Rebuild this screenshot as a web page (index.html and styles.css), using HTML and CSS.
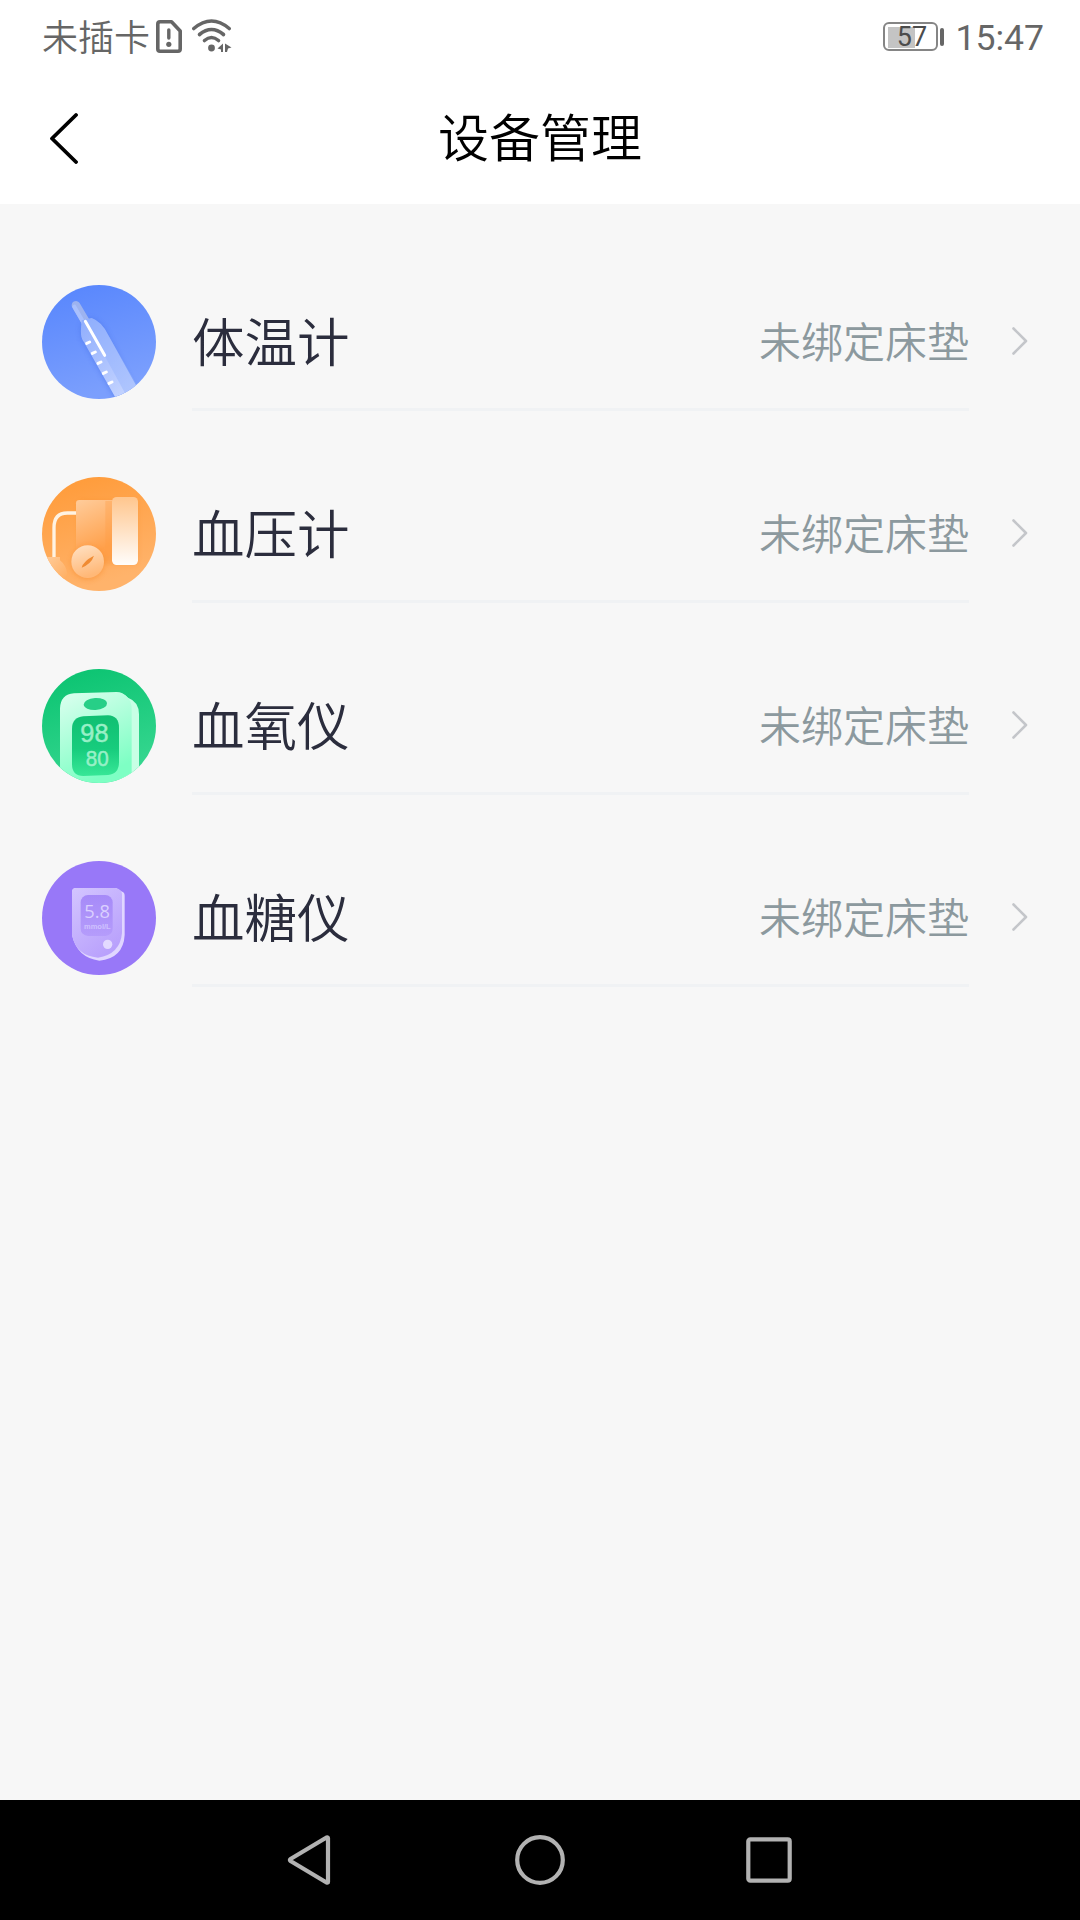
FILE: index.html
```html
<!DOCTYPE html>
<html lang="zh-CN">
<head>
    <meta charset="UTF-8">
    <meta name="viewport" content="width=device-width, initial-scale=1.0">
    <title>设备管理</title>
    <link rel="stylesheet" href="styles.css">
</head>
<body>
    <!-- Status bar -->
    <div class="status-bar">
        <span class="carrier">未插卡</span>
        <svg class="sim-icon" viewBox="0 0 26 33">
            <path d="M4 1.8H15.5L24.2 11V29Q24.2 31.2 22 31.2H4Q1.8 31.2 1.8 29V4Q1.8 1.8 4 1.8Z" fill="none" stroke="#666" stroke-width="3.6" stroke-linejoin="round"/>
            <path d="M12.8 10V18" stroke="#666" stroke-width="3.4" stroke-linecap="round"/>
            <circle cx="12.8" cy="24.3" r="2.6" fill="#666"/>
        </svg>
        <svg class="wifi-icon" viewBox="0 0 40 34">
            <g fill="none" stroke="#666" stroke-width="3.6" stroke-linecap="round">
                <path d="M1.8 9.5Q19.5 -5.5 37.2 9.5"/>
                <path d="M7.5 15.5Q19.5 5.5 31.5 15.5"/>
                <path d="M12.5 21.5Q19.5 15.5 26.5 21.5"/>
            </g>
            <circle cx="19.5" cy="29" r="3.4" fill="#666"/>
            <path d="M25.5 29.5L31 24.5V33H29V30.5ZM33 24.5L39.5 28.5L36 29.5L35 33H33Z" fill="#666"/>
        </svg>
        <div class="battery">
            <div class="battery-body">
                <div class="battery-level"></div>
                <span class="battery-text">57</span>
            </div>
            <div class="battery-cap"></div>
        </div>
        <span class="time">15:47</span>
    </div>

    <!-- Title bar -->
    <header class="header">
        <svg class="back" viewBox="0 0 30 52">
            <path d="M28 3L4 26.5L28 50" fill="none" stroke="#000" stroke-width="3.8" stroke-linecap="round" stroke-linejoin="round"/>
        </svg>
        <h1>设备管理</h1>
    </header>

    <!-- Device list -->
    <main class="device-list">
        <div class="device">
            <svg class="device-icon" viewBox="0 0 342 342">
                <defs>
                    <linearGradient id="blue" x1="0" y1="0" x2="0.3" y2="1">
                        <stop offset="0" stop-color="#5685fd"/>
                        <stop offset="1" stop-color="#7b9ffd"/>
                    </linearGradient>
                    <linearGradient id="glass" x1="0" y1="0" x2="0.7" y2="1">
                        <stop offset="0" stop-color="#8fadfd"/>
                        <stop offset="1" stop-color="#c6d5ff"/>
                    </linearGradient>
                    <filter id="soft" x="-30%" y="-30%" width="160%" height="160%">
                        <feGaussianBlur stdDeviation="8"/>
                    </filter>
                    <clipPath id="round"><circle cx="171" cy="171" r="171"/></clipPath>
                </defs>
                <g clip-path="url(#round)">
                    <rect width="342" height="342" fill="url(#blue)"/>
                    <path d="M115 120L117 160L220 342H296L199 151Q180 105 145 98Z" fill="#4670e8" opacity="0.45" filter="url(#soft)"/>
                    <path d="M102 61L133 114" stroke="#9db3ef" stroke-width="26" stroke-linecap="round"/>
                    <path d="M97 65L127 117" stroke="#a9c0fd" stroke-width="12" stroke-linecap="round"/>
                    <path d="M119 106Q115 140 118 155Q120 163 126 172L225 346L305 342L199 151Q180 110 149 99Z" fill="url(#glass)"/>
                    <path d="M188 212L255 335L310 342L199 151Q180 110 149 99L132 103Z" fill="#8eaefd" opacity="0.4"/>
                    <path d="M130 109L188 211" stroke="#fff" stroke-width="9" stroke-linecap="round"/>
                    <path d="M134 175L143 171M151 205L160 201M168 235L177 231M184 265L193 261M201 295L210 291" stroke="#fff" stroke-width="9" stroke-linecap="round"/>
                </g>
            </svg>
            <div class="device-info">
                <span class="device-name">体温计</span>
                <span class="device-state">未绑定床垫</span>
            </div>
            <svg class="arrow" viewBox="0 0 18 30"><path d="M2.5 2.5L15 15L2.5 27.5"/></svg>
        </div>

        <div class="device">
            <svg class="device-icon" viewBox="0 0 342 342">
                <defs>
                    <linearGradient id="orange" x1="0" y1="0" x2="0.3" y2="1">
                        <stop offset="0.1" stop-color="#ff9c3b"/>
                        <stop offset="1" stop-color="#ffb36b"/>
                    </linearGradient>
                    <linearGradient id="box" x1="0" y1="0" x2="0.3" y2="1">
                        <stop offset="0" stop-color="#ffcc9b"/>
                        <stop offset="1" stop-color="#ffa04a"/>
                    </linearGradient>
                    <linearGradient id="cuff" x1="0" y1="0" x2="0" y2="1">
                        <stop offset="0" stop-color="#ffc68e"/>
                        <stop offset="1" stop-color="#fffdfb"/>
                    </linearGradient>
                    <linearGradient id="gauge" x1="0" y1="0" x2="0.3" y2="1">
                        <stop offset="0" stop-color="#ffe2c5"/>
                        <stop offset="1" stop-color="#ffb877"/>
                    </linearGradient>
                    <linearGradient id="bulb" x1="0" y1="0" x2="1" y2="1">
                        <stop offset="0.2" stop-color="#ffc791"/>
                        <stop offset="1" stop-color="#ffab5b"/>
                    </linearGradient>
                </defs>
                <g clip-path="url(#round)">
                    <rect width="342" height="342" fill="url(#orange)"/>
                    <rect x="108" y="72" width="178" height="190" rx="12" fill="#f5821c" opacity="0.3" filter="url(#soft)"/>
                    <path d="M112 69H212V236H102V79Q102 69 112 69Z" fill="url(#box)"/>
                    <path d="M190 72H212V236H190Z" fill="#ff9d45" opacity="0.35"/>
                    <path d="M102 108H76Q36 108 36 152V240" fill="none" stroke="#fff3e3" stroke-width="10"/>
                    <rect x="210" y="60" width="78" height="204" rx="14" fill="url(#cuff)"/>
                    <path d="M10 240H54V250Q72 264 76 290L60 320L0 290Z" fill="url(#bulb)"/>
                    <circle cx="137" cy="258" r="50" fill="#f5821c" opacity="0.4" filter="url(#soft)"/>
                    <circle cx="137" cy="254" r="49" fill="url(#gauge)"/>
                    <path d="M119 272Q124 252 156 236Q148 260 119 272Z" fill="#f08b32"/>
                </g>
            </svg>
            <div class="device-info">
                <span class="device-name">血压计</span>
                <span class="device-state">未绑定床垫</span>
            </div>
            <svg class="arrow" viewBox="0 0 18 30"><path d="M2.5 2.5L15 15L2.5 27.5"/></svg>
        </div>

        <div class="device">
            <svg class="device-icon" viewBox="0 0 342 342">
                <defs>
                    <linearGradient id="green" x1="0" y1="0" x2="0.3" y2="1">
                        <stop offset="0" stop-color="#08c26f"/>
                        <stop offset="1" stop-color="#35d68f"/>
                    </linearGradient>
                    <linearGradient id="mint" x1="0" y1="0" x2="0.4" y2="1">
                        <stop offset="0" stop-color="#ddfff0"/>
                        <stop offset="1" stop-color="#7effc4"/>
                    </linearGradient>
                    <linearGradient id="screen" x1="0" y1="0" x2="0" y2="1">
                        <stop offset="0" stop-color="#10bf72"/>
                        <stop offset="0.55" stop-color="#17cc7d"/>
                        <stop offset="1" stop-color="#37e797"/>
                    </linearGradient>
                </defs>
                <g clip-path="url(#round)">
                    <rect width="342" height="342" fill="url(#green)"/>
                    <path d="M230 72Q244 72 258 86Q291 98 291 136V342H230Z" fill="#c7ffe5"/>
                    <path d="M54 342V118Q56 76 96 73L224 69Q242 69 256 85Q269 96 269 122V342Z" fill="url(#mint)"/>
                    <ellipse cx="160" cy="105" rx="35" ry="18" fill="#27cf87" transform="rotate(-3 160 105)"/>
                    <path d="M90 180Q90 145 124 142L198 139Q231 140 231 176V280Q231 315 198 318L124 321Q90 321 90 286Z" fill="url(#screen)"/>
                    <text class="oxygen-value" x="115" y="218" font-size="76">98</text>
                    <text class="oxygen-value" x="131" y="290" font-size="66" textLength="69" lengthAdjust="spacingAndGlyphs">80</text>
                </g>
            </svg>
            <div class="device-info">
                <span class="device-name">血氧仪</span>
                <span class="device-state">未绑定床垫</span>
            </div>
            <svg class="arrow" viewBox="0 0 18 30"><path d="M2.5 2.5L15 15L2.5 27.5"/></svg>
        </div>

        <div class="device">
            <svg class="device-icon" viewBox="0 0 342 342">
                <defs>
                    <linearGradient id="lilac" x1="0" y1="0" x2="0.6" y2="1">
                        <stop offset="0" stop-color="#d3c5ff"/>
                        <stop offset="1" stop-color="#b9a1fc"/>
                    </linearGradient>
                    <linearGradient id="lcd" x1="0" y1="0" x2="0" y2="1">
                        <stop offset="0" stop-color="#a68af8"/>
                        <stop offset="1" stop-color="#b59cfb"/>
                    </linearGradient>
                </defs>
                <circle cx="171" cy="171" r="171" fill="#9878f8"/>
                <path d="M102 81H222L238 91Q248 94 248 104V222Q244 292 172 299Q105 290 90 222V93Q90 81 102 81Z" fill="#e0d6ff"/>
                <path d="M102 81H220Q238 84 240 98V216Q234 280 168 290Q102 284 90 222V93Q90 81 102 81Z" fill="url(#lilac)"/>
                <rect x="116" y="102" width="96" height="123" rx="22" fill="url(#lcd)"/>
                <text class="sugar-value" x="127" y="171" font-size="57" textLength="77" lengthAdjust="spacingAndGlyphs">5.8</text>
                <text class="sugar-unit" x="126" y="203" font-size="21" textLength="80" lengthAdjust="spacingAndGlyphs">mmol/L</text>
                <circle cx="197" cy="250" r="14" fill="#e3daff"/>
            </svg>
            <div class="device-info">
                <span class="device-name">血糖仪</span>
                <span class="device-state">未绑定床垫</span>
            </div>
            <svg class="arrow" viewBox="0 0 18 30"><path d="M2.5 2.5L15 15L2.5 27.5"/></svg>
        </div>
    </main>

    <!-- System navigation -->
    <nav class="nav-bar">
        <svg class="nav-back" viewBox="0 0 44 50"><path d="M41 3V47Q41 48 39.5 47.5L3.5 26Q2.5 25 3.5 24L39.5 2.5Q41 2 41 3Z"/></svg>
        <svg class="nav-home" viewBox="0 0 50 50"><circle cx="25" cy="25" r="22.8"/></svg>
        <svg class="nav-recent" viewBox="0 0 46 46"><rect x="2.3" y="2.3" width="41.4" height="41.4" rx="2"/></svg>
    </nav>
</body>
</html>
```
FILE: styles.css
```css
* {
    margin: 0;
    padding: 0;
    box-sizing: border-box;
}

body {
    display: flex;
    flex-direction: column;
    width: 1080px;
    height: 1920px;
    font-family: 'Noto Sans CJK SC', sans-serif;
    font-weight: 350;
    background: #f7f7f7;
    overflow: hidden;
}

svg {
    display: block;
    flex-shrink: 0;
}

.status-bar {
    display: flex;
    align-items: center;
    height: 72px;
    padding: 0 36px 0 42px;
    background: #fff;
    color: #666;
}

.carrier {
    font-size: 36px;
    line-height: 72px;
    padding-bottom: 2px;
}

.sim-icon {
    width: 26px;
    height: 33px;
    margin-left: 6px;
}

.wifi-icon {
    width: 40px;
    height: 34px;
    margin-left: 10px;
}

.battery {
    display: flex;
    align-items: center;
    gap: 2px;
    margin-left: auto;
    padding-top: 1px;
}

.battery-body {
    position: relative;
    width: 55px;
    height: 29px;
    padding: 3px;
    border: 2px solid #858585;
    border-radius: 6px;
}

.battery-level {
    width: 27px;
    height: 21px;
    background: #c4c4c4;
}

.battery-text {
    position: absolute;
    top: -1px;
    left: 1px;
    width: 51px;
    font-family: Roboto, sans-serif;
    font-size: 27px;
    font-weight: 400;
    line-height: 29px;
    text-align: center;
    color: #4c4c4c;
}

.battery-cap {
    width: 4px;
    height: 18px;
    border-radius: 2px;
    background: #666;
}

.time {
    margin-left: 11px;
    padding-top: 3px;
    font-family: Roboto, sans-serif;
    font-size: 35.6px;
    font-weight: 400;
    line-height: 72px;
}

.header {
    display: grid;
    grid-template-columns: 30px 1fr 30px;
    align-items: center;
    height: 132px;
    padding: 0 48px;
    background: #fff;
}

.header h1 {
    padding-bottom: 6px;
    font-size: 51px;
    font-weight: 350;
    line-height: 126px;
    text-align: center;
    color: #000;
}

.back {
    width: 30px;
    height: 52px;
}

.device-list {
    flex: 1;
    padding-top: 15px;
}

.device {
    display: flex;
    height: 192px;
    padding: 0 51px 0 42px;
}

.device-icon {
    width: 114px;
    height: 114px;
    margin-top: 66px;
}

.device-info {
    display: flex;
    align-items: center;
    justify-content: space-between;
    width: 777px;
    margin-left: 36px;
    padding-top: 51px;
    border-bottom: 3px solid #f0f2f4;
}

.device-name {
    font-size: 52.5px;
    color: #2b2d3d;
}

.device-state {
    font-size: 42px;
    color: #8c999e;
}

.arrow {
    width: 18px;
    height: 30px;
    margin: 107px 0 0 auto;
}

.arrow path {
    fill: none;
    stroke: #c4c6ca;
    stroke-width: 2.6;
    stroke-linecap: round;
    stroke-linejoin: round;
}

.oxygen-value {
    font-family: 'Liberation Sans', sans-serif;
    font-weight: 400;
    fill: #98f0c7;
    stroke: #98f0c7;
    stroke-width: 1.5;
}

.sugar-value {
    font-family: 'Open Sans', sans-serif;
    font-weight: 500;
    fill: #dacfff;
}

.sugar-unit {
    font-family: 'Liberation Sans', sans-serif;
    font-weight: 700;
    fill: #cfc1ff;
}

.nav-bar {
    display: flex;
    align-items: center;
    height: 120px;
    padding-left: 287px;
    background: #000;
}

.nav-bar svg {
    fill: none;
    stroke: #b2b2b2;
    stroke-width: 4.2;
    stroke-linejoin: round;
}

.nav-back {
    width: 44px;
    height: 50px;
}

.nav-home {
    width: 50px;
    height: 50px;
    margin-left: 184px;
}

.nav-recent {
    width: 46px;
    height: 46px;
    margin-left: 181px;
}
```
